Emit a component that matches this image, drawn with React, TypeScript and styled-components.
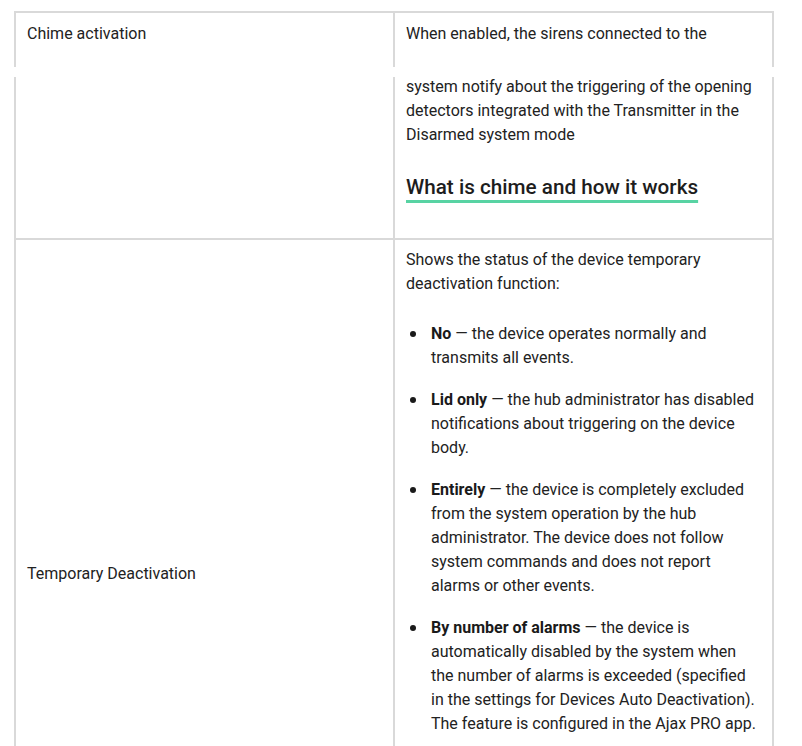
import React from "react";
import styled, { createGlobalStyle } from "styled-components";

const GlobalStyle = createGlobalStyle`
  html, body { margin: 0; padding: 0; background: #ffffff; }
  body {
    font-family: Roboto, "Liberation Sans", Arial, sans-serif;
    color: #222222;
    -webkit-font-smoothing: antialiased;
  }
`;

const BORDER = "#d9d9d9";

const Page = styled.div`
  padding: 11px 0 0 14px;
  display: flex;
  flex-direction: column;
`;

const Table = styled.div<{ $top?: boolean }>`
  width: 760px;
  box-sizing: border-box;
  border-left: 2px solid ${BORDER};
  border-right: 2px solid ${BORDER};
  border-top: ${(p) => (p.$top ? `2px solid ${BORDER}` : "none")};
  display: flex;
  flex-direction: column;
`;

const Gap = styled.div`
  height: 10px;
`;

const Row = styled.div<{ $divider?: boolean; $height?: number }>`
  display: grid;
  grid-template-columns: 379px 377px;
  border-bottom: ${(p) => (p.$divider ? `2px solid ${BORDER}` : "none")};
  ${(p) => (p.$height ? `height: ${p.$height}px; box-sizing: border-box;` : "")}
`;

const LabelCell = styled.div<{ $middle?: boolean; $pt?: number }>`
  border-right: 2px solid ${BORDER};
  padding: ${(p) => p.$pt ?? 8}px 11px 8px 11px;
  font-size: 16px;
  line-height: 24px;
  display: flex;
  align-items: ${(p) => (p.$middle ? "center" : "flex-start")};
`;

const ValueCell = styled.div<{ $pt?: number; $pb?: number }>`
  padding: ${(p) => p.$pt ?? 8}px 11px ${(p) => p.$pb ?? 8}px 11px;
  font-size: 16px;
  line-height: 24px;
`;

const Text = styled.p<{ $mt?: number; $mb?: number }>`
  margin: ${(p) => p.$mt ?? 0}px 0 ${(p) => p.$mb ?? 0}px 0;
`;

const GuideLink = styled.a`
  display: inline-block;
  margin-top: 27px;
  font-size: 20.7px;
  line-height: 26px;
  font-weight: 500;
  color: #1d1d1d;
  text-decoration: underline;
  text-decoration-color: #58d3a3;
  text-decoration-thickness: 3px;
  text-underline-offset: 6px;
  text-decoration-skip-ink: none;
`;

const List = styled.ul`
  margin: 0;
  padding: 0 0 0 25px;
  list-style: none;
`;

const Item = styled.li`
  position: relative;
  margin-top: 18px;
  &:first-child { margin-top: 0; }
  &::before {
    content: "";
    position: absolute;
    left: -21px;
    top: 9px;
    width: 6px;
    height: 6px;
    border-radius: 50%;
    background: #1a1a1a;
  }
`;

const Strong = styled.b`
  font-weight: 700;
  color: #1a1a1a;
`;

const items: { term: string; text: string }[] = [
  { term: "No", text: "the device operates normally and transmits all events." },
  {
    term: "Lid only",
    text: "the hub administrator has disabled notifications about triggering on the device body.",
  },
  {
    term: "Entirely",
    text: "the device is completely excluded from the system operation by the hub administrator. The device does not follow system commands and does not report alarms or other events.",
  },
  {
    term: "By number of alarms",
    text: "the device is automatically disabled by the system when the number of alarms is exceeded (specified in the settings for Devices Auto Deactivation). The feature is configured in the Ajax PRO app.",
  },
];

export default function App() {
  return (
    <>
      <GlobalStyle />
      <Page>
        <Table $top>
          <Row $height={54}>
            <LabelCell $pt={9}>Chime activation</LabelCell>
            <ValueCell $pt={9}>When enabled, the sirens connected to the</ValueCell>
          </Row>
        </Table>
        <Gap />
        <Table>
          <Row $divider>
            <LabelCell />
            <ValueCell $pt={0} $pb={37}>
              <Text $mt={-2}>
                system notify about the triggering of the opening detectors integrated with the Transmitter in the
                Disarmed system mode
              </Text>
              <GuideLink href="#">What is chime and how it works</GuideLink>
            </ValueCell>
          </Row>
          <Row>
            <LabelCell $middle>Temporary Deactivation</LabelCell>
            <ValueCell $pb={171}>
              <Text $mb={26}>Shows the status of the device temporary deactivation function:</Text>
              <List>
                {items.map((it) => (
                  <Item key={it.term}>
                    <Strong>{it.term}</Strong> — {it.text}
                  </Item>
                ))}
              </List>
            </ValueCell>
          </Row>
        </Table>
      </Page>
    </>
  );
}
